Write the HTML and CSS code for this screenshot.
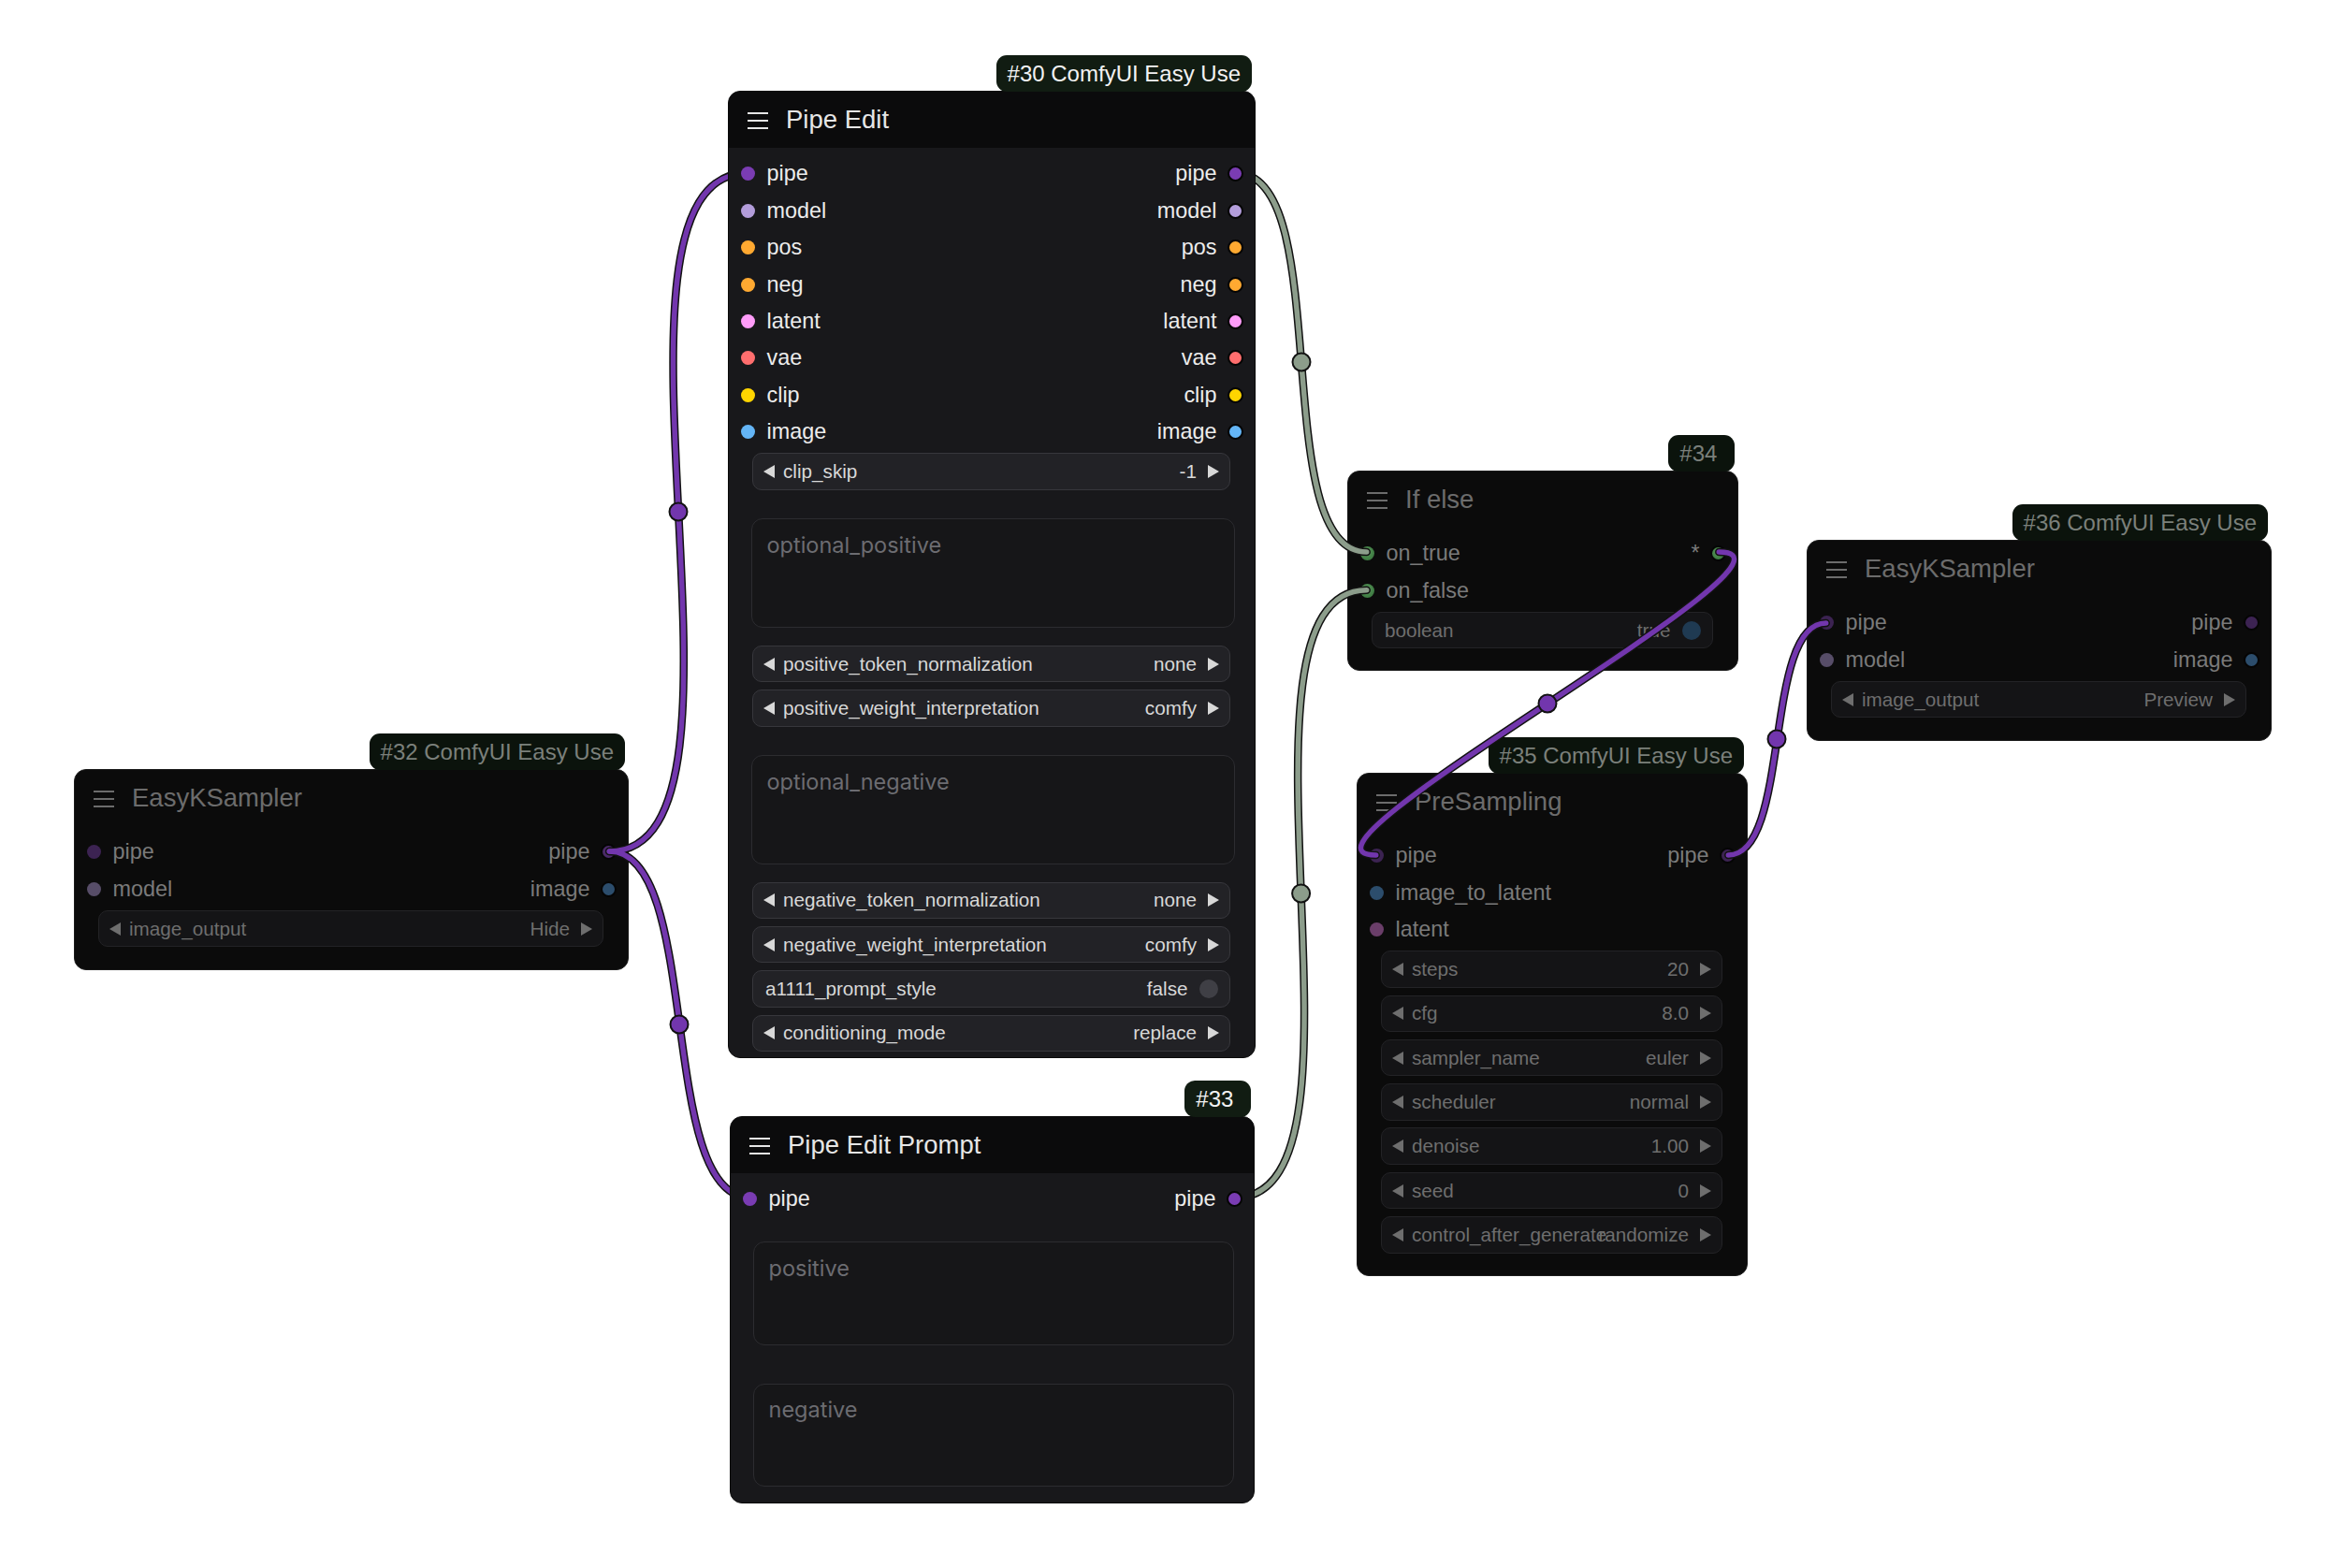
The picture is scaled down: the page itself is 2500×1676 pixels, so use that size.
FILE: index.html
```html
<!DOCTYPE html>
<html>
<head>
<meta charset="utf-8">
<title>ComfyUI graph</title>
<link rel="stylesheet" href="styles.css">
</head>
<body>
<div class="canvas">

  <!-- #32 EasyKSampler -->
  <div class="node dim n32">
    <div class="badge">#32 ComfyUI Easy Use</div>
    <div class="title"><svg class="ham" viewBox="0 0 22 18"><path d="M0 1h22M0 9h22M0 17h22"/></svg><span>EasyKSampler</span></div>
    <div class="slots">
      <div class="row"><div class="in"><i class="dot d-pipe"></i>pipe</div><div class="out">pipe<i class="dot d-pipe2"></i></div></div>
      <div class="row"><div class="in"><i class="dot d-model"></i>model</div><div class="out">image<i class="dot d-image"></i></div></div>
    </div>
    <div class="widgets">
      <div class="w combo"><i class="al"></i><span class="lbl">image_output</span><span class="val">Hide</span><i class="ar"></i></div>
    </div>
  </div>

  <!-- #34 If else -->
  <div class="node dim n34">
    <div class="badge">#34 </div>
    <div class="title"><svg class="ham" viewBox="0 0 22 18"><path d="M0 1h22M0 9h22M0 17h22"/></svg><span>If else</span></div>
    <div class="slots">
      <div class="row"><div class="in"><i class="dot d-green"></i>on_true</div><div class="out">*<i class="dot d-green"></i></div></div>
      <div class="row"><div class="in"><i class="dot d-green"></i>on_false</div><div class="out"></div></div>
    </div>
    <div class="widgets">
      <div class="w toggle"><span class="lbl">boolean</span><span class="val">true</span><i class="knob knob-on"></i></div>
    </div>
  </div>

  <!-- #35 PreSampling -->
  <div class="node dim n35">
    <div class="badge">#35 ComfyUI Easy Use</div>
    <div class="title"><svg class="ham" viewBox="0 0 22 18"><path d="M0 1h22M0 9h22M0 17h22"/></svg><span>PreSampling</span></div>
    <div class="slots">
      <div class="row"><div class="in"><i class="dot d-pipe"></i>pipe</div><div class="out">pipe<i class="dot d-pipe"></i></div></div>
      <div class="row"><div class="in"><i class="dot d-image"></i>image_to_latent</div><div class="out"></div></div>
      <div class="row"><div class="in"><i class="dot d-latent"></i>latent</div><div class="out"></div></div>
    </div>
    <div class="widgets">
      <div class="w combo"><i class="al"></i><span class="lbl">steps</span><span class="val">20</span><i class="ar"></i></div>
      <div class="w combo"><i class="al"></i><span class="lbl">cfg</span><span class="val">8.0</span><i class="ar"></i></div>
      <div class="w combo"><i class="al"></i><span class="lbl">sampler_name</span><span class="val">euler</span><i class="ar"></i></div>
      <div class="w combo"><i class="al"></i><span class="lbl">scheduler</span><span class="val">normal</span><i class="ar"></i></div>
      <div class="w combo"><i class="al"></i><span class="lbl">denoise</span><span class="val">1.00</span><i class="ar"></i></div>
      <div class="w combo"><i class="al"></i><span class="lbl">seed</span><span class="val">0</span><i class="ar"></i></div>
      <div class="w combo"><i class="al"></i><span class="lbl">control_after_generate</span><span class="val">randomize</span><i class="ar"></i></div>
    </div>
  </div>

  <!-- #36 EasyKSampler -->
  <div class="node dim n36">
    <div class="badge">#36 ComfyUI Easy Use</div>
    <div class="title"><svg class="ham" viewBox="0 0 22 18"><path d="M0 1h22M0 9h22M0 17h22"/></svg><span>EasyKSampler</span></div>
    <div class="slots">
      <div class="row"><div class="in"><i class="dot d-pipe"></i>pipe</div><div class="out">pipe<i class="dot d-pipe"></i></div></div>
      <div class="row"><div class="in"><i class="dot d-model"></i>model</div><div class="out">image<i class="dot d-image"></i></div></div>
    </div>
    <div class="widgets">
      <div class="w combo"><i class="al"></i><span class="lbl">image_output</span><span class="val">Preview</span><i class="ar"></i></div>
    </div>
  </div>

  <!-- links -->
  <svg class="links" width="2500" height="1676" viewBox="0 0 2500 1676">
    <g class="edge">
      <path d="M651.3 910 C836.3 910 614 185 799 185"/>
      <path d="M651.3 910 C751.1 910 701.6 1280 801.4 1280"/>
      <path d="M1321.2 185 C1428.2 185 1353.7 590 1460.7 590"/>
      <path d="M1320.5 1280 C1486.5 1280 1294.7 630.7 1460.7 630.7"/>
      <path d="M1837.3 590 C1959.6 590 1348.4 914 1470.7 914"/>
      <path d="M1847.3 914 C1914.6 914 1884.4 666 1951.7 666"/>
    </g>
    <g class="purple">
      <path d="M651.3 910 C836.3 910 614 185 799 185"/>
      <path d="M651.3 910 C751.1 910 701.6 1280 801.4 1280"/>
      <path d="M1837.3 590 C1959.6 590 1348.4 914 1470.7 914"/>
      <path d="M1847.3 914 C1914.6 914 1884.4 666 1951.7 666"/>
    </g>
    <g class="grey">
      <path d="M1321.2 185 C1428.2 185 1353.7 590 1460.7 590"/>
      <path d="M1320.5 1280 C1486.5 1280 1294.7 630.7 1460.7 630.7"/>
    </g>
    <g class="mid-purple">
      <circle cx="725" cy="547" r="9.5"/>
      <circle cx="726" cy="1095" r="9.5"/>
      <circle cx="1654" cy="752" r="9.5"/>
      <circle cx="1899" cy="790" r="9.5"/>
    </g>
    <g class="mid-grey">
      <circle cx="1391" cy="387" r="9.5"/>
      <circle cx="1390.6" cy="955" r="9.5"/>
    </g>
  </svg>

  <!-- #30 Pipe Edit -->
  <div class="node bright n30">
    <div class="badge">#30 ComfyUI Easy Use</div>
    <div class="title"><svg class="ham" viewBox="0 0 22 18"><path d="M0 1h22M0 9h22M0 17h22"/></svg><span>Pipe Edit</span></div>
    <div class="slots">
      <div class="row"><div class="in"><i class="dot c-pipe"></i>pipe</div><div class="out">pipe<i class="dot c-pipe"></i></div></div>
      <div class="row"><div class="in"><i class="dot c-model"></i>model</div><div class="out">model<i class="dot c-model"></i></div></div>
      <div class="row"><div class="in"><i class="dot c-cond"></i>pos</div><div class="out">pos<i class="dot c-cond"></i></div></div>
      <div class="row"><div class="in"><i class="dot c-cond"></i>neg</div><div class="out">neg<i class="dot c-cond"></i></div></div>
      <div class="row"><div class="in"><i class="dot c-latent"></i>latent</div><div class="out">latent<i class="dot c-latent"></i></div></div>
      <div class="row"><div class="in"><i class="dot c-vae"></i>vae</div><div class="out">vae<i class="dot c-vae"></i></div></div>
      <div class="row"><div class="in"><i class="dot c-clip"></i>clip</div><div class="out">clip<i class="dot c-clip"></i></div></div>
      <div class="row"><div class="in"><i class="dot c-image"></i>image</div><div class="out">image<i class="dot c-image"></i></div></div>
    </div>
    <div class="widgets">
      <div class="w combo"><i class="al"></i><span class="lbl">clip_skip</span><span class="val">-1</span><i class="ar"></i></div>
      <div class="ta ta-big">optional_positive</div>
      <div class="w combo"><i class="al"></i><span class="lbl">positive_token_normalization</span><span class="val">none</span><i class="ar"></i></div>
      <div class="w combo"><i class="al"></i><span class="lbl">positive_weight_interpretation</span><span class="val">comfy</span><i class="ar"></i></div>
      <div class="ta ta-big">optional_negative</div>
      <div class="w combo"><i class="al"></i><span class="lbl">negative_token_normalization</span><span class="val">none</span><i class="ar"></i></div>
      <div class="w combo"><i class="al"></i><span class="lbl">negative_weight_interpretation</span><span class="val">comfy</span><i class="ar"></i></div>
      <div class="w toggle"><span class="lbl">a1111_prompt_style</span><span class="val">false</span><i class="knob"></i></div>
      <div class="w combo"><i class="al"></i><span class="lbl">conditioning_mode</span><span class="val">replace</span><i class="ar"></i></div>
    </div>
  </div>

  <!-- #33 Pipe Edit Prompt -->
  <div class="node bright n33">
    <div class="badge">#33 </div>
    <div class="title"><svg class="ham" viewBox="0 0 22 18"><path d="M0 1h22M0 9h22M0 17h22"/></svg><span>Pipe Edit Prompt</span></div>
    <div class="slots">
      <div class="row"><div class="in"><i class="dot c-pipe"></i>pipe</div><div class="out">pipe<i class="dot c-pipe"></i></div></div>
    </div>
    <div class="widgets">
      <div class="ta ta-small">positive</div>
      <div class="ta ta-small">negative</div>
    </div>
  </div>

</div>
</body>
</html>
```

FILE: styles.css
```css
html, body {
  margin: 0;
  padding: 0;
  background: #ffffff;
}

body {
  width: 2500px;
  height: 1676px;
  overflow: hidden;
  font-family: "Liberation Sans", Arial, sans-serif;
}

.canvas {
  position: relative;
  width: 2500px;
  height: 1676px;
  background: #ffffff;
}

/* ---------- nodes ---------- */
.node {
  position: absolute;
  box-sizing: border-box;
  border-radius: 13px;
  display: flex;
  flex-direction: column;
}

.node.dim {
  z-index: 1;
  background: #0b0b0b;
  border: 1.5px solid #1b1b1b;
  color: #707070;
}

.node.bright {
  z-index: 3;
  background: #18181b;
  border: 1px solid #0a0a0a;
  color: #e4e4e4;
}

.n30 { left: 778px; top: 97px; width: 564px; height: 1034px; }
.n33 { left: 780px; top: 1193px; width: 561px; height: 414px; }
.n32 { left: 79px; top: 822px; width: 593px; height: 215px; }
.n34 { left: 1440px; top: 503px; width: 418px; height: 214px; }
.n35 { left: 1450px; top: 826px; width: 418px; height: 538px; }
.n36 { left: 1931px; top: 577px; width: 497px; height: 215px; }

/* ---------- badge ---------- */
.badge {
  position: absolute;
  bottom: 100%;
  right: 3px;
  height: 39px;
  line-height: 40px;
  padding: 0 12px;
  border-radius: 11px;
  font-size: 24px;
  white-space: pre;
}

.bright .badge {
  background: #111c12;
  color: #f2f2f2;
}

.dim .badge {
  background: #0b130c;
  color: #7b807b;
}

/* ---------- title ---------- */
.title {
  flex: none;
  height: 60px;
  display: flex;
  align-items: center;
  padding-left: 20px;
  font-size: 27.5px;
  border-radius: 12px 12px 0 0;
}

.bright .title {
  background: #0b0b0c;
  color: #e6e6e6;
}

.dim .title {
  color: #6c6c6c;
}

.ham {
  flex: none;
  width: 22px;
  height: 18px;
  margin-right: 19px;
  margin-top: 2px;
  fill: none;
  stroke: currentColor;
  stroke-width: 2;
}

/* ---------- slots ---------- */
.slots {
  padding-top: 8.3px;
}

.row {
  height: 39.4px;
  display: flex;
  justify-content: space-between;
  align-items: center;
  font-size: 23.4px;
  white-space: nowrap;
}

.bright .row { color: #ececec; }
.dim .row { color: #7a7a7a; }

.in, .out {
  display: flex;
  align-items: center;
}

.in { padding-left: 12.5px; }
.out { padding-right: 12px; }

.dot {
  display: block;
  flex: none;
  width: 15px;
  height: 15px;
  border-radius: 50%;
}

.in .dot { margin-right: 13px; }

.out .dot {
  box-sizing: border-box;
  width: 17px;
  height: 17px;
  border: 2px solid #050505;
  margin-left: 11.5px;
}

.c-pipe { background: #7a3cb3; }
.c-model { background: #b39ddb; }
.c-cond { background: #ffa931; }
.c-latent { background: #ff9cf9; }
.c-vae { background: #ff6e6e; }
.c-clip { background: #ffd500; }
.c-image { background: #64b5f6; }

.d-pipe { background: #3c2352; }
.d-pipe2 { background: #4b2a68; }
.d-model { background: #574d68; }
.d-image { background: #2c4d6c; }
.d-latent { background: #6a3e69; }
.d-green { background: radial-gradient(circle at 45% 40%, #5a9a5c 0%, #3d7a41 70%); }

/* ---------- widgets ---------- */
.widgets {
  display: flex;
  flex-direction: column;
  gap: 7.8px;
  margin-top: 2.8px;
}

.w {
  box-sizing: border-box;
  height: 39.5px;
  margin: 0 26px 0 24.5px;
  border-radius: 10px;
  border: 1.5px solid;
  display: flex;
  align-items: center;
  font-size: 20.7px;
  white-space: nowrap;
}

.bright .w {
  background: #222226;
  border-color: #37373c;
  color: #d8d8d8;
}

.dim .w {
  background: #141416;
  border-color: #232326;
  color: #6e6e6e;
}

.combo { padding: 0 11.5px 0 11px; }
.toggle { padding: 0 12.5px 0 13.5px; }

.lbl {
  flex: 1 1 0;
  min-width: 0;
  overflow: visible;
}

.val { flex: none; }

.al, .ar {
  display: block;
  flex: none;
  width: 0;
  height: 0;
  border-top: 7px solid transparent;
  border-bottom: 7px solid transparent;
}

.al {
  border-right: 12px solid currentColor;
  margin-right: 9.5px;
}

.ar {
  border-left: 12px solid currentColor;
  margin-left: 11.5px;
}

.knob {
  display: block;
  flex: none;
  width: 20px;
  height: 20px;
  border-radius: 50%;
  margin-left: 12px;
  background: #3f3f45;
}

.knob-on { background: #1f3a52; }

/* ---------- text areas ---------- */
.ta {
  box-sizing: border-box;
  margin: 22.7px 21px 10.8px 23.5px;
  border: 1.5px solid #2c2c30;
  border-radius: 12px;
  background: #161618;
  font-family: Inter, "Noto Sans", sans-serif;
  font-size: 23.5px;
  line-height: 1.21;
  color: #6c6c71;
  padding: 13.5px 16px;
}

.ta-big { height: 117px; }
.ta-small { height: 110.5px; }

/* ---------- links ---------- */
.links {
  position: absolute;
  left: 0;
  top: 0;
  z-index: 2;
  pointer-events: none;
}

.links path {
  fill: none;
  stroke-linecap: round;
}

.edge path {
  stroke: #121212;
  stroke-width: 8.5;
}

.purple path {
  stroke: #7236ad;
  stroke-width: 5.5;
}

.grey path {
  stroke: #8c9d8b;
  stroke-width: 5.5;
}

.mid-purple circle {
  fill: #7236ad;
  stroke: #121212;
  stroke-width: 2;
}

.mid-grey circle {
  fill: #8c9d8b;
  stroke: #121212;
  stroke-width: 2;
}
```
